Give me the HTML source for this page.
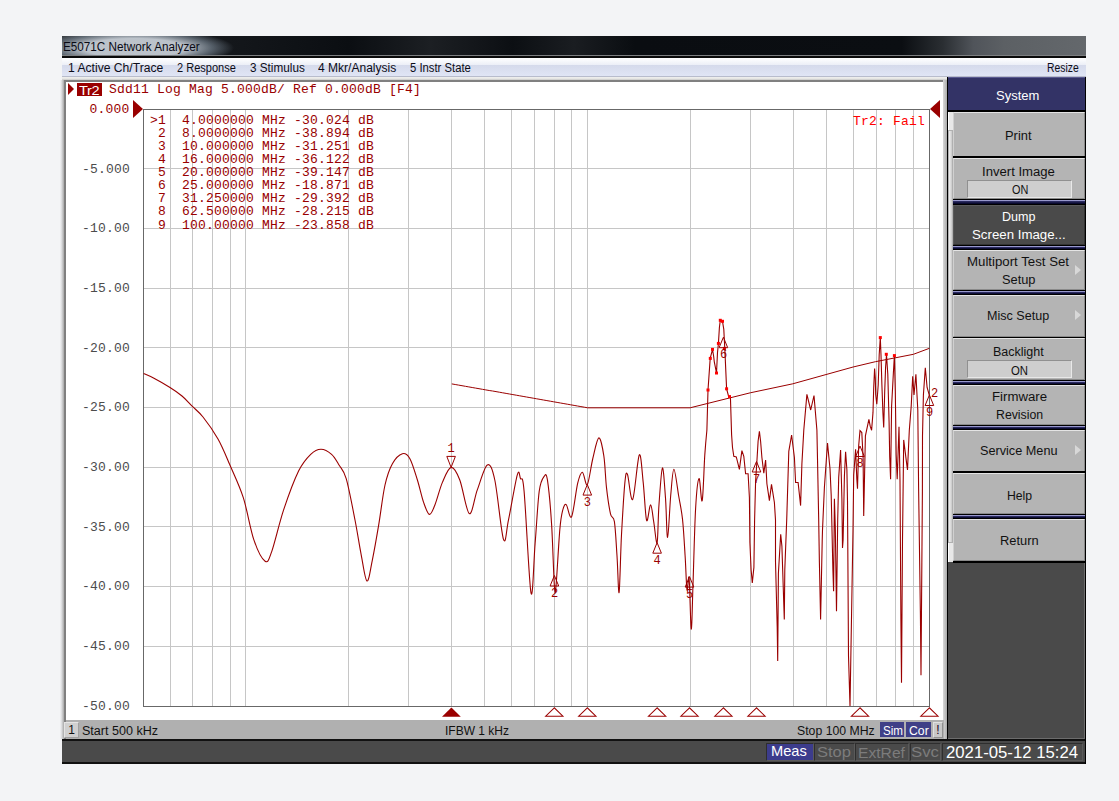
<!DOCTYPE html>
<html><head><meta charset="utf-8">
<style>
*{margin:0;padding:0;box-sizing:border-box}
html,body{width:1119px;height:801px;overflow:hidden;background:#f3f4f6;font-family:"Liberation Sans",sans-serif}
.a{position:absolute}
.t{white-space:nowrap}
.mono{font-family:"Liberation Mono",monospace;font-size:13px;letter-spacing:0.2px;color:#990000;white-space:pre;line-height:13px}
.btn{position:absolute;left:953px;width:132px;background:#b4b4b4;border-top:1px solid #e4e4e4;border-left:1px solid #d0d0d0;border-right:1px solid #8a8a8a;border-bottom:1px solid #8a8a8a}
.sep{position:absolute;left:953px;width:132px;background:#000}
.nsep{position:absolute;left:953px;width:132px;background:linear-gradient(180deg,#9898cc 0,#9898cc 1px,#2a2a60 1.5px,#000020 100%);border-top:1px solid #000;border-bottom:1px solid #000}
.onb{position:absolute;left:967px;width:105px;height:18px;background:#cecece;border-top:1px solid #909090;border-left:1px solid #909090;border-bottom:1px solid #e8e8e8;border-right:1px solid #e8e8e8}
.sb{position:absolute;top:743px;height:18px;border:1px solid #2e2e2e;border-right-color:#5a5a5a;border-bottom-color:#5a5a5a}
.arr{position:absolute;left:1075px;width:0;height:0;border-top:5px solid transparent;border-bottom:5px solid transparent;border-left:6px solid #d8d8d8}
</style></head><body>
<div class="a" style="left:62px;top:36px;width:1024px;height:21px;background:linear-gradient(90deg,#2a2d31 0%,#15181c 15%,#0b0e12 28%,#1c1f23 36%,#0c0f13 44%,#1a1d21 50%,#0a0d11 56%,#0b0e12 82%,#2a2e32 86%,#50545a 89%,#5c6064 92%,#64686c 100%)"></div>
<div class="a" style="left:62px;top:36px;width:220px;height:21px;background:radial-gradient(ellipse 100px 19px at 72px 12px,rgba(196,203,211,0.95) 50%,rgba(140,155,170,0.55) 78%,rgba(0,0,0,0) 100%)"></div>
<div class="a" style="left:62px;top:55px;width:1024px;height:1px;background:#7c7e80"></div><div class="a" style="left:62px;top:56px;width:1024px;height:2px;background:#0a0a0a"></div>
<div class="a" style="left:62px;top:58px;width:1024px;height:19px;background:linear-gradient(180deg,#ffffff 0%,#eceff7 38%,#d5daeb 40%,#e0e5f5 100%);border-bottom:1px solid #b8bccc"></div>
<div class="a" style="left:62px;top:77px;width:886px;height:664px;background:linear-gradient(180deg,#f0f0ee 0,#e4e4e2 2px,#c0c0c0 3px,#c8c8c8 4px)"></div>
<div class="a" style="left:64px;top:80px;width:884px;height:660px;background:#fff;border-left:2px solid #808080;border-top:2px solid #808080"></div>
<div class="a" style="left:60px;top:80px;width:4px;height:659px;background:linear-gradient(90deg,rgba(243,244,246,0),#dcdddf 40%,#a8a8a8 100%)"></div>
<div class="a" style="left:943px;top:80px;width:5px;height:660px;background:linear-gradient(90deg,#d8d8d8,#a0a0a0)"></div>
<div class="a" style="left:947px;top:77px;width:139px;height:664px;background:#4a4a4a;border-left:1px solid #000"></div>
<svg class="a" style="left:0;top:0" width="1119" height="801" viewBox="0 0 1119 801"><g stroke="#c6c6c6" stroke-width="1" shape-rendering="crispEdges"><line x1="170.5" y1="110" x2="170.5" y2="706"/><line x1="192.5" y1="110" x2="192.5" y2="706"/><line x1="212.5" y1="110" x2="212.5" y2="706"/><line x1="230.5" y1="110" x2="230.5" y2="706"/><line x1="245.5" y1="110" x2="245.5" y2="706"/><line x1="348.5" y1="110" x2="348.5" y2="706"/><line x1="408.5" y1="110" x2="408.5" y2="706"/><line x1="451.5" y1="110" x2="451.5" y2="706"/><line x1="484.5" y1="110" x2="484.5" y2="706"/><line x1="511.5" y1="110" x2="511.5" y2="706"/><line x1="534.5" y1="110" x2="534.5" y2="706"/><line x1="554.5" y1="110" x2="554.5" y2="706"/><line x1="571.5" y1="110" x2="571.5" y2="706"/><line x1="587.5" y1="110" x2="587.5" y2="706"/><line x1="690.5" y1="110" x2="690.5" y2="706"/><line x1="750.5" y1="110" x2="750.5" y2="706"/><line x1="793.5" y1="110" x2="793.5" y2="706"/><line x1="826.5" y1="110" x2="826.5" y2="706"/><line x1="853.5" y1="110" x2="853.5" y2="706"/><line x1="876.5" y1="110" x2="876.5" y2="706"/><line x1="895.5" y1="110" x2="895.5" y2="706"/><line x1="913.5" y1="110" x2="913.5" y2="706"/><line x1="144" y1="168.5" x2="929" y2="168.5"/><line x1="144" y1="228.5" x2="929" y2="228.5"/><line x1="144" y1="288.5" x2="929" y2="288.5"/><line x1="144" y1="347.5" x2="929" y2="347.5"/><line x1="144" y1="407.5" x2="929" y2="407.5"/><line x1="144" y1="467.5" x2="929" y2="467.5"/><line x1="144" y1="526.5" x2="929" y2="526.5"/><line x1="144" y1="586.5" x2="929" y2="586.5"/><line x1="144" y1="646.5" x2="929" y2="646.5"/></g><path d="M143.5 706.5 V109.5 H929.5 V706.5 H143.5" fill="none" stroke="#686868" stroke-width="1" shape-rendering="crispEdges"/><path d="M451.8 383.9 L455.2 384.5 L458.6 385.1 L462.0 385.7 L465.4 386.3 L468.8 386.9 L472.2 387.5 L475.6 388.1 L479.0 388.7 L482.4 389.3 L485.8 389.9 L489.2 390.5 L492.6 391.0 L496.0 391.6 L499.3 392.2 L502.7 392.8 L506.1 393.4 L509.5 394.0 L512.9 394.6 L516.3 395.2 L519.7 395.8 L523.1 396.4 L526.5 397.0 L529.9 397.6 L533.3 398.2 L536.7 398.8 L540.1 399.4 L543.5 400.0 L546.9 400.6 L550.3 401.2 L553.7 401.8 L557.1 402.4 L560.5 403.0 L563.9 403.6 L567.3 404.2 L570.7 404.8 L574.1 405.4 L577.5 406.0 L580.9 406.6 L584.3 407.2 L587.7 407.8 L690.1 407.8 L750.3 392.8 L792.8 383.8 L853.1 367.0 L875.4 361.7 L913.4 354.3 L929.4 348.3" fill="none" stroke="#9a0000" stroke-width="1.0"/><path d="M143.6 373.5 C145.2 374.2 149.1 375.7 153.5 378.0 C157.9 380.3 165.2 384.5 170.0 387.5 C174.8 390.5 178.3 392.9 182.0 396.0 C185.7 399.1 188.9 402.9 192.4 406.4 C195.9 409.9 198.7 411.6 203.0 417.0 C207.3 422.4 213.5 431.0 218.0 439.0 C222.5 447.0 225.6 455.0 229.8 464.8 C234.0 474.6 239.3 485.2 243.3 497.7 C247.3 510.2 250.2 529.0 253.8 539.6 C257.4 550.2 262.1 559.2 265.1 561.2 C268.1 563.2 268.6 560.2 271.7 551.6 C274.8 543.0 279.2 523.2 283.7 509.7 C288.2 496.2 294.2 480.0 298.7 470.8 C303.2 461.6 307.0 457.9 310.7 454.3 C314.4 450.7 317.5 449.2 321.0 449.2 C324.5 449.2 328.6 451.7 331.6 454.3 C334.6 456.9 336.6 460.9 339.0 465.0 C341.4 469.1 343.5 469.5 346.2 478.7 C348.9 487.9 352.5 507.3 355.0 520.0 C357.5 532.7 359.2 544.6 361.2 554.8 C363.2 565.0 365.1 580.2 367.0 581.0 C368.9 581.8 370.4 569.1 372.4 559.8 C374.3 550.4 376.6 537.4 378.7 524.9 C380.8 512.4 382.7 495.2 385.0 485.0 C387.3 474.8 389.5 468.9 392.4 463.7 C395.3 458.5 399.5 454.5 402.4 453.7 C405.3 452.9 407.4 454.3 409.9 458.7 C412.4 463.1 415.1 472.7 417.4 480.0 C419.7 487.3 421.6 496.7 423.6 502.4 C425.6 508.1 427.5 514.0 429.4 514.4 C431.3 514.8 432.7 510.3 434.9 505.0 C437.1 499.7 439.7 488.7 442.4 482.4 C445.1 476.1 448.2 467.8 451.1 467.4 C454.0 467.0 456.8 472.3 459.8 480.0 C462.8 487.7 466.4 512.0 469.3 513.6 C472.2 515.2 474.3 498.0 477.3 489.9 C480.3 481.8 484.4 466.6 487.3 465.0 C490.2 463.4 492.1 467.6 494.8 480.0 C497.5 492.4 501.2 532.8 503.5 539.4 C505.8 546.0 506.2 530.6 508.5 519.9 C510.8 509.1 515.3 481.8 517.3 474.9 C519.3 468.0 519.4 475.8 520.5 478.5 C521.6 481.2 522.4 472.3 524.1 491.4 C525.9 510.5 529.2 584.3 531.0 593.0 C532.8 601.7 533.7 560.5 535.1 543.6 C536.5 526.7 537.7 502.6 539.2 491.4 C540.7 480.2 542.8 478.1 544.2 476.3 C545.6 474.5 546.3 472.4 547.5 480.4 C548.7 488.4 550.5 507.0 551.6 524.4 C552.7 541.8 553.6 574.5 554.3 584.8 C555.0 595.1 555.1 595.1 556.0 586.0 C556.9 576.9 558.7 542.4 559.8 529.9 C560.9 517.4 561.5 514.9 562.6 510.7 C563.7 506.5 564.7 503.6 566.2 504.6 C567.7 505.6 569.7 520.3 571.6 516.7 C573.5 513.1 575.9 490.6 577.7 483.2 C579.5 475.8 580.8 472.0 582.4 472.2 C584.0 472.4 585.6 486.9 587.3 484.6 C589.0 482.3 590.9 466.3 592.8 458.5 C594.7 450.7 597.0 438.4 598.8 437.9 C600.6 437.4 602.5 447.4 603.8 455.7 C605.1 464.0 605.4 477.9 606.5 487.6 C607.6 497.3 609.2 508.1 610.5 513.8 C611.8 519.5 613.3 514.7 614.4 521.7 C615.5 528.7 616.2 544.0 617.0 555.8 C617.8 567.6 618.4 595.9 619.1 592.4 C619.9 588.9 620.5 553.1 621.5 534.8 C622.5 516.5 623.9 492.4 624.9 482.4 C625.9 472.3 626.2 471.7 627.5 474.5 C628.8 477.3 630.7 502.7 632.7 499.4 C634.7 496.1 637.5 457.7 639.3 454.9 C641.0 452.1 642.0 471.5 643.2 482.4 C644.4 493.3 645.4 516.7 646.6 520.4 C647.8 524.1 649.4 504.5 650.6 504.7 C651.8 504.9 652.6 515.4 653.7 521.7 C654.8 528.0 656.2 545.3 657.1 542.7 C658.0 540.1 658.0 518.5 658.9 506.0 C659.8 493.6 661.3 469.3 662.4 468.0 C663.5 466.7 664.6 486.5 665.5 498.1 C666.4 509.7 666.7 537.8 667.6 537.4 C668.5 537.0 669.7 506.9 670.7 495.5 C671.8 484.1 672.6 469.3 673.9 469.3 C675.2 469.3 677.2 487.2 678.6 495.5 C680.0 503.8 681.4 509.1 682.5 519.1 C683.6 529.1 684.4 544.0 685.1 555.8 C685.9 567.6 686.3 586.1 687.0 589.8 C687.7 593.5 688.4 571.5 689.1 578.0 C689.8 584.5 690.6 628.0 691.2 629.1 C691.9 630.2 692.3 604.7 693.0 584.6 C693.7 564.5 694.6 526.3 695.6 508.6 C696.6 490.9 697.9 479.8 699.0 478.5 C700.1 477.2 701.2 504.6 702.2 500.7 C703.2 496.8 704.0 466.7 704.8 454.9 C705.6 443.1 706.5 434.1 706.9 430.0 L708.0 390.0 L710.2 358.4 L712.5 349.4 L713.6 356.0 L714.3 361.8 L716.5 373.0 L717.5 352.5 L718.4 343.8 L719.4 327.5 L720.3 320.3 L722.5 321.3 L723.8 329.4 L724.4 341.2 L724.8 348.3 L726.6 388.8 L728.7 396.6 L730.4 396.6 L731.6 434.8 L732.5 447.5 L733.8 456.3 L736.3 456.9 L739.4 469.4 L741.9 450.6 L743.8 456.3 L745.6 473.8 L748.1 473.8 L749.4 497.5 L749.9 542.5 L751.1 569.8 L752.3 582.9 L753.9 567.4 L754.6 520.0 L755.6 481.3 L756.9 461.3 L758.1 441.3 L759.4 431.3 L760.6 441.3 L761.9 457.5 L763.8 473.1 L765.6 460.0 L766.9 483.8 L769.4 500.6 L771.5 484.4 L774.4 502.5 L775.5 520.0 L775.5 561.5 L777.2 626.7 L777.7 661.1 L778.4 573.4 L780.7 534.2 L781.9 546.1 L784.3 619.6 L784.8 569.8 L786.7 520.0 L786.9 513.8 L788.8 451.3 L791.6 435.0 L794.4 457.5 L795.6 482.5 L798.1 482.5 L800.6 505.6 L801.9 463.8 L803.8 430.0 L806.9 394.4 L810.7 410.0 L814.0 395.5 L816.9 430.0 L817.5 458.8 L818.7 520.0 L819.4 562.7 L820.6 619.6 L822.2 541.3 L822.5 530.0 L824.4 487.5 L827.5 443.1 L830.0 468.7 L831.2 494.9 L832.9 569.8 L833.6 591.2 L834.4 498.7 L835.3 527.0 L836.5 611.3 L837.7 520.0 L838.7 477.4 L840.6 450.0 L841.9 498.7 L842.5 547.9 L843.1 540.0 L844.4 476.2 L845.6 451.8 L846.9 470.0 L847.5 501.1 L848.5 655.8 L850.0 706.0 L853.0 530.0 L853.7 474.9 L855.6 449.3 L856.8 478.7 L857.5 488.7 L858.7 445.6 L860.0 430.6 L861.8 432.5 L863.1 457.5 L863.5 496.2 L863.7 516.1 L865.4 435.8 L868.9 419.3 L870.2 426.2 L871.6 430.3 L873.0 412.4 L873.7 387.7 L874.6 368.5 L875.3 378.1 L875.7 394.6 L876.8 404.2 L878.2 385.0 L879.2 354.7 L880.3 337.6 L881.0 354.7 L881.9 385.0 L882.9 412.4 L883.7 427.5 L884.7 391.8 L885.6 367.1 L886.5 354.7 L887.8 374.3 L889.1 423.0 L889.7 456.7 L890.6 479.2 L891.6 406.2 L893.4 372.5 L894.4 355.6 L895.3 391.2 L896.2 454.9 L897.2 479.2 L899.0 426.8 L900.0 481.0 L900.9 619.8 L901.5 682.8 L902.5 540.0 L903.7 439.9 L906.5 462.4 L907.5 469.9 L909.3 430.5 L911.2 406.2 L912.7 376.2 L914.0 395.0 L915.9 374.3 L917.8 410.0 L918.6 487.4 L920.4 613.8 L921.0 675.3 L922.4 491.2 L922.5 436.0 L923.4 395.0 L925.3 367.8 L927.1 387.5 L929.4 395.5" fill="none" stroke="#9a0000" stroke-width="1.1" stroke-linejoin="miter" stroke-miterlimit="3"/><g fill="#ff0000"><rect x="706.5" y="388.5" width="3" height="3"/><rect x="708.8" y="356.9" width="3" height="3"/><rect x="711.0" y="347.9" width="3" height="3"/><rect x="715.0" y="371.5" width="3" height="3"/><rect x="716.9" y="341.9" width="3" height="3"/><rect x="718.8" y="318.8" width="3" height="3"/><rect x="721.0" y="319.8" width="3" height="3"/><rect x="722.9" y="346.9" width="3" height="3"/><rect x="725.1" y="387.3" width="3" height="3"/><rect x="728.0" y="395.1" width="3" height="3"/><rect x="878.8" y="336.1" width="3" height="3"/><rect x="884.8" y="352.8" width="3" height="3"/><rect x="892.9" y="354.1" width="3" height="3"/></g><g fill="none" stroke="#9a0000" stroke-width="1.0"><path d="M451.1 467.4 L446.8 456.4 H455.40000000000003 Z"/><path d="M554.4 575.5 L550.1 586.0 H558.6999999999999 Z"/><path d="M587.3 484.6 L583.0 495.1 H591.5999999999999 Z"/><path d="M657.1 542.7 L652.8000000000001 553.2 H661.4 Z"/><path d="M689.5 576.6 L685.2 587.1 H693.8 Z"/><path d="M723.4 337.2 L719.1 347.7 H727.6999999999999 Z"/><path d="M756.5 461.5 L752.2 472.0 H760.8 Z"/><path d="M860 446 L855.7 456.5 H864.3 Z"/><path d="M929.4 395 L925.1 405.5 H933.6999999999999 Z"/></g><g fill="#9a0000" font-family="Liberation Mono" font-size="12px"><text x="447.6" y="451.9">1</text><text x="550.9" y="596.5">2</text><text x="583.8" y="505.6">3</text><text x="653.6" y="563.7">4</text><text x="686.0" y="597.6">5</text><text x="719.9" y="358.2">6</text><text x="753.0" y="482.5">7</text><text x="856.5" y="467">8</text><text x="925.9" y="416">9</text><text x="931" y="397">2</text></g><path d="M451.4 707.5 L442 716.8 H460.8 Z" fill="#9a0000"/><path d="M554.3 707.8 L545.6999999999999 716.2 H562.9 Z" fill="none" stroke="#9a0000" stroke-width="1.05"/><path d="M587.3 707.8 L578.6999999999999 716.2 H595.9 Z" fill="none" stroke="#9a0000" stroke-width="1.05"/><path d="M657.1 707.8 L648.5 716.2 H665.7 Z" fill="none" stroke="#9a0000" stroke-width="1.05"/><path d="M689.5 707.8 L680.9 716.2 H698.1 Z" fill="none" stroke="#9a0000" stroke-width="1.05"/><path d="M723.4 707.8 L714.8 716.2 H732.0 Z" fill="none" stroke="#9a0000" stroke-width="1.05"/><path d="M756.5 707.8 L747.9 716.2 H765.1 Z" fill="none" stroke="#9a0000" stroke-width="1.05"/><path d="M860 707.8 L851.4 716.2 H868.6 Z" fill="none" stroke="#9a0000" stroke-width="1.05"/><path d="M929.4 707.8 L920.8 716.2 H938.0 Z" fill="none" stroke="#9a0000" stroke-width="1.05"/></svg>
<div class="a" style="left:68px;top:83px;width:0;height:0;border-top:6.5px solid transparent;border-bottom:6.5px solid transparent;border-left:6px solid #990000"></div>
<div class="a" style="left:77px;top:83px;width:25px;height:13px;background:#990000"></div>
<div class="a" style="left:78.5px;top:83.5px;color:#fff;font-size:13px;line-height:13px;letter-spacing:-0.3px;transform:scaleX(1.12);transform-origin:0 0">Tr2</div>
<div class="a mono" style="left:109px;top:83px">Sdd11 Log Mag 5.000dB/ Ref 0.000dB [F4]</div>
<div class="a mono" style="left:89.6px;top:103px">0.000</div>
<div class="a" style="left:133px;top:100px;width:0;height:0;border-top:9.5px solid transparent;border-bottom:9.5px solid transparent;border-left:10px solid #990000"></div>
<div class="a" style="left:930px;top:100px;width:0;height:0;border-top:9.5px solid transparent;border-bottom:9.5px solid transparent;border-right:10px solid #990000"></div>
<div class="a mono" style="left:853px;top:115px;color:#ff0000">Tr2: Fail</div>
<div class="a mono" style="left:150px;top:114px;line-height:13.07px">&gt;1  4.0000000 MHz -30.024 dB
 2  8.0000000 MHz -38.894 dB
 3  10.000000 MHz -31.251 dB
 4  16.000000 MHz -36.122 dB
 5  20.000000 MHz -39.147 dB
 6  25.000000 MHz -18.871 dB
 7  31.250000 MHz -29.392 dB
 8  62.500000 MHz -28.215 dB
 9  100.00000 MHz -23.858 dB</div>
<div class="a mono" style="left:82px;top:163px;color:#4c4c4c">-5.000</div>
<div class="a mono" style="left:82px;top:222px;color:#4c4c4c">-10.00</div>
<div class="a mono" style="left:82px;top:282px;color:#4c4c4c">-15.00</div>
<div class="a mono" style="left:82px;top:342px;color:#4c4c4c">-20.00</div>
<div class="a mono" style="left:82px;top:401px;color:#4c4c4c">-25.00</div>
<div class="a mono" style="left:82px;top:461px;color:#4c4c4c">-30.00</div>
<div class="a mono" style="left:82px;top:521px;color:#4c4c4c">-35.00</div>
<div class="a mono" style="left:82px;top:580px;color:#4c4c4c">-40.00</div>
<div class="a mono" style="left:82px;top:640px;color:#4c4c4c">-45.00</div>
<div class="a mono" style="left:82px;top:700px;color:#4c4c4c">-50.00</div>
<div class="a" style="left:66px;top:720px;width:878px;height:19px;background:#b0b0b0"></div>
<div class="a" style="left:64px;top:722px;width:15px;height:16px;background:#d0d0d0;border:1px solid #e4e4e4;border-right-color:#a0a0a0;border-bottom-color:#a0a0a0;font-size:12px;line-height:14px;text-align:center;color:#111">1</div>
<div class="a" style="left:880px;top:722px;width:24px;height:15px;background:#3f3f87"></div>
<div class="a" style="left:906px;top:722px;width:25px;height:15px;background:#3f3f87"></div>
<div class="a" style="left:933px;top:722px;width:10px;height:16px;background:#c8c8c8;border:1px solid #e0e0e0;border-right-color:#909090;border-bottom-color:#909090;color:#200020;font-size:12px;line-height:14px;text-align:center">!</div>
<div class="a" style="left:948px;top:78px;width:5px;height:484px;background:#e8e8e8;border-left:1px solid #fff"></div>
<div class="a" style="left:948px;top:130px;width:5px;height:413px;background:linear-gradient(90deg,#f0f0f0,#c8c8c8);border:1px solid #b0b0b0"></div>
<div class="a" style="left:948px;top:77px;width:138px;height:35px;background:#333366;border-bottom:2px solid #000;border-top:1px solid #5a5a90"></div>
<div class="btn" style="top:112px;height:45px"></div>
<div class="sep" style="top:156px;height:2px"></div>
<div class="btn" style="top:158px;height:41px"></div>
<div class="onb" style="top:180px"></div>
<div class="nsep" style="top:199px;height:6px"></div>
<div class="btn" style="top:205px;height:40px;background:#4a4a4a;border-top-color:#5a5a5a;border-left-color:#5a5a5a;border-right-color:#333;border-bottom-color:#333"></div>
<div class="nsep" style="top:245px;height:5px"></div>
<div class="btn" style="top:250px;height:40px"></div>
<div class="nsep" style="top:290px;height:5px"></div>
<div class="btn" style="top:295px;height:42px"></div>
<div class="sep" style="top:337px;height:1px"></div>
<div class="btn" style="top:338px;height:42px"></div>
<div class="onb" style="top:360px"></div>
<div class="nsep" style="top:380px;height:5px"></div>
<div class="btn" style="top:385px;height:40px"></div>
<div class="nsep" style="top:425px;height:5px"></div>
<div class="btn" style="top:430px;height:42px"></div>
<div class="sep" style="top:471px;height:2px"></div>
<div class="btn" style="top:473px;height:41px"></div>
<div class="nsep" style="top:514px;height:5px"></div>
<div class="btn" style="top:519px;height:42px"></div>
<div class="sep" style="top:561px;height:2px"></div>
<div class="arr" style="top:265px"></div>
<div class="arr" style="top:310px"></div>
<div class="arr" style="top:445px"></div>
<div class="a" style="left:62px;top:739px;width:1024px;height:25px;background:#4a4a4a;border-top:2px solid #111;border-bottom:2px solid #111"></div>
<div class="sb" style="left:766px;width:48px;background:#3c3c8c"></div>
<div class="sb" style="left:814px;width:41px"></div>
<div class="sb" style="left:855px;width:54px"></div>
<div class="sb" style="left:910px;width:31px"></div>
<div class="sb" style="left:942px;width:141px"></div>
<div class="a" style="left:948px;top:563px;width:137px;height:176px;border-right:1px solid #6c6c6c;border-bottom:1px solid #6c6c6c"></div><div class="a" style="left:1085px;top:77px;width:1px;height:687px;background:#000"></div>
<div class="a t" style="left:62.70px;top:41.31px;font-size:12.5px;line-height:12.5px;transform:scaleX(0.9369);transform-origin:0 0;color:#0a0a14;">E5071C Network Analyzer</div><div class="a t" style="left:67.92px;top:62.03px;font-size:12px;line-height:12px;transform:scaleX(1.0104);transform-origin:0 0;color:#0c0c18;">1 Active Ch/Trace</div><div class="a t" style="left:177.00px;top:62.03px;font-size:12px;line-height:12px;transform:scaleX(0.9178);transform-origin:0 0;color:#0c0c18;">2 Response</div><div class="a t" style="left:249.86px;top:62.03px;font-size:12px;line-height:12px;transform:scaleX(0.9779);transform-origin:0 0;color:#0c0c18;">3 Stimulus</div><div class="a t" style="left:318.14px;top:62.03px;font-size:12px;line-height:12px;transform:scaleX(1.0025);transform-origin:0 0;color:#0c0c18;">4 Mkr/Analysis</div><div class="a t" style="left:410.28px;top:62.03px;font-size:12px;line-height:12px;transform:scaleX(0.9409);transform-origin:0 0;color:#0c0c18;">5 Instr State</div><div class="a t" style="left:1047.36px;top:62.03px;font-size:12px;line-height:12px;transform:scaleX(0.8630);transform-origin:0 0;color:#0c0c18;">Resize</div><div class="a t" style="left:995.70px;top:90.03px;font-size:12px;line-height:12px;transform:scaleX(1.0818);transform-origin:0 0;color:#fff;">System</div><div class="a t" style="left:1005.48px;top:130.11px;font-size:12px;line-height:12px;transform:scaleX(1.0733);transform-origin:0 0;color:#111;">Print</div><div class="a t" style="left:982.48px;top:166.03px;font-size:12px;line-height:12px;transform:scaleX(1.0933);transform-origin:0 0;color:#111;">Invert Image</div><div class="a t" style="left:1011.50px;top:184.25px;font-size:12px;line-height:12px;transform:scaleX(0.9078);transform-origin:0 0;color:#111;">ON</div><div class="a t" style="left:1002.12px;top:211.39px;font-size:12px;line-height:12px;transform:scaleX(1.0457);transform-origin:0 0;color:#fff;">Dump</div><div class="a t" style="left:972.12px;top:229.25px;font-size:12px;line-height:12px;transform:scaleX(1.1054);transform-origin:0 0;color:#fff;">Screen Image...</div><div class="a t" style="left:967.48px;top:256.03px;font-size:12px;line-height:12px;transform:scaleX(1.1031);transform-origin:0 0;color:#111;">Multiport Test Set</div><div class="a t" style="left:1002.12px;top:274.25px;font-size:12px;line-height:12px;transform:scaleX(1.0677);transform-origin:0 0;color:#111;">Setup</div><div class="a t" style="left:987.12px;top:309.75px;font-size:12px;line-height:12px;transform:scaleX(1.0470);transform-origin:0 0;color:#111;">Misc Setup</div><div class="a t" style="left:993.12px;top:346.11px;font-size:12px;line-height:12px;transform:scaleX(1.0412);transform-origin:0 0;color:#111;">Backlight</div><div class="a t" style="left:1011.14px;top:364.75px;font-size:12px;line-height:12px;transform:scaleX(0.9456);transform-origin:0 0;color:#111;">ON</div><div class="a t" style="left:991.56px;top:391.03px;font-size:12px;line-height:12px;transform:scaleX(1.1027);transform-origin:0 0;color:#111;">Firmware</div><div class="a t" style="left:995.70px;top:409.25px;font-size:12px;line-height:12px;transform:scaleX(1.0243);transform-origin:0 0;color:#111;">Revision</div><div class="a t" style="left:980.12px;top:445.47px;font-size:12px;line-height:12px;transform:scaleX(1.0560);transform-origin:0 0;color:#111;">Service Menu</div><div class="a t" style="left:1006.56px;top:489.75px;font-size:12px;line-height:12px;transform:scaleX(1.0185);transform-origin:0 0;color:#111;">Help</div><div class="a t" style="left:999.56px;top:534.53px;font-size:12px;line-height:12px;transform:scaleX(1.0719);transform-origin:0 0;color:#111;">Return</div><div class="a t" style="left:82.12px;top:725.01px;font-size:12px;line-height:12px;transform:scaleX(1.0460);transform-origin:0 0;color:#111;">Start 500 kHz</div><div class="a t" style="left:445.20px;top:725.03px;font-size:12px;line-height:12px;transform:scaleX(0.9986);transform-origin:0 0;color:#111;">IFBW 1 kHz</div><div class="a t" style="left:796.56px;top:725.37px;font-size:12px;line-height:12px;transform:scaleX(1.0219);transform-origin:0 0;color:#111;">Stop 100 MHz</div><div class="a t" style="left:882.50px;top:725.49px;font-size:12px;line-height:12px;transform:scaleX(0.9698);transform-origin:0 0;color:#fff;">Sim</div><div class="a t" style="left:909.00px;top:725.49px;font-size:12px;line-height:12px;transform:scaleX(1.0190);transform-origin:0 0;color:#fff;">Cor</div><div class="a t" style="left:771.40px;top:743.42px;font-size:15px;line-height:15px;transform:scaleX(0.9767);transform-origin:0 0;color:#fff;">Meas</div><div class="a t" style="left:817.32px;top:743.90px;font-size:15px;line-height:15px;transform:scaleX(1.1013);transform-origin:0 0;color:#7c7c7c;">Stop</div><div class="a t" style="left:858.18px;top:744.70px;font-size:15px;line-height:15px;transform:scaleX(1.0425);transform-origin:0 0;color:#7c7c7c;">ExtRef</div><div class="a t" style="left:911.10px;top:743.90px;font-size:15px;line-height:15px;transform:scaleX(1.1190);transform-origin:0 0;color:#7c7c7c;">Svc</div><div class="a t" style="left:946.12px;top:744.70px;font-size:16px;line-height:16px;transform:scaleX(1.0451);transform-origin:0 0;color:#fff;">2021-05-12 15:24</div>
</body></html>
